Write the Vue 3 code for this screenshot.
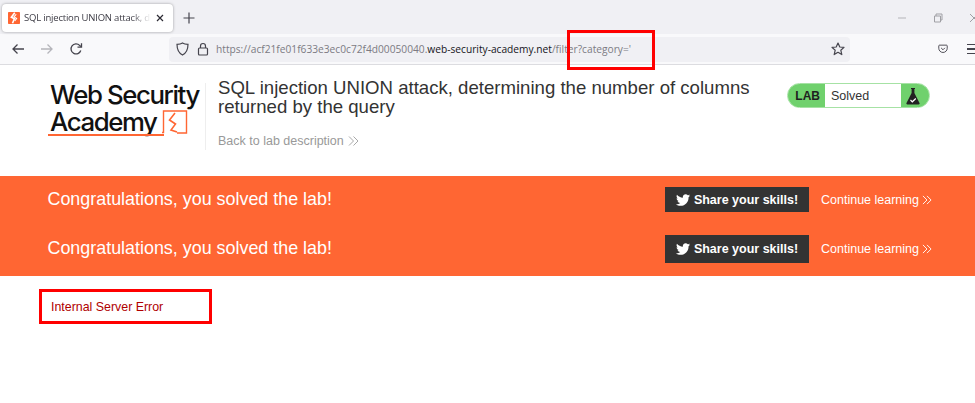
<script setup>
const rows = [1, 2]
</script>

<template>
  <div class="page">
    <div class="tabstrip">
      <div class="tab">
        <svg class="favicon" width="12" height="12" viewBox="0 0 16 16">
          <rect width="16" height="16" rx="1" fill="#ff6633" />
          <path d="M9 1 L4.500 7 L8.500 9 L6 15" fill="none" stroke="#fff" stroke-width="2.200" />
          <path d="M11 3 L8 6.500 L11.500 8.500 L9 12" fill="none" stroke="#fff" stroke-width="1.500" />
        </svg>
        <span class="tab-title">SQL injection UNION attack, de</span>
        <svg class="tab-close" width="10" height="10" viewBox="0 0 10 10">
          <path d="M2 2 L8 8 M8 2 L2 8" stroke="#2b2a33" stroke-width="1.200" />
        </svg>
      </div>
      <svg class="new-tab" width="12" height="12" viewBox="0 0 12 12">
        <path d="M6 .5 V11.500 M.5 6 H11.500" stroke="#45444d" stroke-width="1.200" />
      </svg>
      <div class="window-controls">
        <svg width="10" height="10" viewBox="0 0 10 10"><path d="M1 5 H9" stroke="#b4b4b8" /></svg>
        <svg width="10" height="10" viewBox="0 0 10 10">
          <path d="M1.500 3 H7.500 V9 H1.500 Z M3 3 V1 H9 V7 H7.500" fill="none" stroke="#a0a0a5" />
        </svg>
        <svg width="10" height="10" viewBox="0 0 10 10"><path d="M1 1 L9 9 M9 1 L1 9" stroke="#a0a0a5" /></svg>
      </div>
    </div>

    <div class="toolbar">
      <div class="nav">
        <svg width="14" height="14" viewBox="0 0 14 14">
          <path d="M13 7 H2 M6.500 2.500 L2 7 L6.500 11.500" fill="none" stroke="#45444d" stroke-width="1.300" />
        </svg>
        <svg width="14" height="14" viewBox="0 0 14 14">
          <path d="M1 7 H12 M7.500 2.500 L12 7 L7.500 11.500" fill="none" stroke="#b5b5ba" stroke-width="1.300" />
        </svg>
        <svg width="14" height="14" viewBox="0 0 14 14">
          <path d="M11.800 8.500 A5 5 0 1 1 10.600 3.400 L12 4.600" fill="none" stroke="#45444d" stroke-width="1.300" />
          <path d="M12.500 1.200 V5.200 H8.500" fill="none" stroke="#45444d" stroke-width="1.300" />
        </svg>
      </div>
      <div class="urlbar">
        <svg width="13" height="14" viewBox="0 0 13 14">
          <path d="M6.500 1 C8 2 10 2.300 12 2.300 C12 8 10.500 11 6.500 13 C2.500 11 1 8 1 2.300 C3 2.300 5 2 6.500 1 Z" fill="none" stroke="#45444d" stroke-width="1.200" />
        </svg>
        <svg width="12" height="14" viewBox="0 0 12 14">
          <rect x="1.500" y="6" width="9" height="7" rx="1" fill="none" stroke="#45444d" stroke-width="1.200" />
          <path d="M3.500 6 V4 A2.500 2.500 0 0 1 8.500 4 V6" fill="none" stroke="#45444d" stroke-width="1.200" />
        </svg>
        <span class="url">https://acf21fe01f633e3ec0c72f4d00050040.<b>web-security-academy.net</b>/filter?category='</span>
        <svg class="star" width="14" height="14" viewBox="0 0 14 14">
          <path d="M7 1 L8.800 5 L13 5.400 L9.800 8.200 L10.800 12.600 L7 10.300 L3.200 12.600 L4.200 8.200 L1 5.400 L5.200 5 Z" fill="none" stroke="#45444d" stroke-width="1.200" stroke-linejoin="round" />
        </svg>
      </div>
      <svg class="pocket" width="13" height="12" viewBox="0 0 13 12">
        <path d="M2 1 H11 A1 1 0 0 1 12 2 V5 A5.500 5.500 0 0 1 1 5 V2 A1 1 0 0 1 2 1 Z" fill="none" stroke="#45444d" stroke-width="1.200" />
        <path d="M4 4.500 L6.500 7 L9 4.500" fill="none" stroke="#45444d" stroke-width="1.200" />
      </svg>
      <div class="menu"><i></i><i></i><i></i></div>
    </div>

    <div class="lab-header">
      <div class="logo">
        <div class="logo-line">Web Security</div>
        <div class="logo-line second">
          <span>Academy</span>
          <svg class="logo-mark" width="26" height="26" viewBox="0 0 26 26">
            <path d="M0 22.500 H1.500 V1 H24.500 V23 H15" fill="none" stroke="#ff6633" stroke-width="1.400" />
            <path d="M13 3 L7.500 10 L13.500 14 L9 20 L15 22" fill="none" stroke="#ff6633" stroke-width="1.600" />
          </svg>
        </div>
        <div class="logo-underline"></div>
      </div>
      <div class="title-block">
        <h1>SQL injection UNION attack, determining the number of columns returned by the query</h1>
        <a class="back">Back to lab description <span class="chev"><svg width="11" height="10" viewBox="0 0 11 10"><path d="M1 .5 L5.500 5 L1 9.500 M5.500 .5 L10 5 L5.500 9.500" fill="none" stroke="#a8a8a8" stroke-width="1" /></svg></span></a>
      </div>
      <div class="badge">
        <span class="badge-lab">LAB</span>
        <span class="badge-state">Solved</span>
        <span class="badge-icon">
          <svg width="14" height="18" viewBox="0 0 14 18">
            <path d="M5 1 H9 V2 H8.400 V6 L13.500 16 A1 1 0 0 1 12.600 17.500 H1.400 A1 1 0 0 1 .5 16 L5.600 6 V2 H5 Z" fill="#222" />
            <path d="M4.500 13 L6.300 14.800 L9.800 11.500" fill="none" stroke="#fff" stroke-width="1.200" />
          </svg>
        </span>
      </div>
    </div>

    <div class="banner">
      <div v-for="r in rows" :key="r" class="banner-row">
        <span class="congrats">Congratulations, you solved the lab!</span>
        <a class="share">
          <svg width="14" height="12" viewBox="0 0 24 20">
            <path fill="#fff" d="M24 2.400c-.9.400-1.800.7-2.800.8 1-.6 1.800-1.600 2.200-2.700-1 .6-2 1-3.100 1.200C19.300.7 18 0 16.600 0c-2.700 0-4.900 2.200-4.900 4.900 0 .4 0 .8.1 1.100C7.700 5.800 4.100 3.900 1.700.9 1.200 1.600 1 2.500 1 3.400c0 1.700.9 3.200 2.200 4.100-.8 0-1.600-.2-2.200-.6v.1c0 2.400 1.700 4.400 3.900 4.800-.4.100-.8.200-1.300.2-.3 0-.6 0-.9-.1.600 2 2.400 3.400 4.600 3.400-1.700 1.300-3.800 2.100-6.100 2.100-.4 0-.8 0-1.200-.1C2.200 19.200 4.800 20 7.500 20c9.100 0 14-7.500 14-14v-.6c1-.7 1.800-1.600 2.500-3z" />
          </svg>
          Share your skills!
        </a>
        <a class="continue">Continue learning <svg width="10" height="10" viewBox="0 0 11 10"><path d="M1 .5 L5.500 5 L1 9.500 M5.500 .5 L10 5 L5.500 9.500" fill="none" stroke="#fff" stroke-width="1" /></svg></a>
      </div>
    </div>

    <div class="error">Internal Server Error</div>

    <div class="mark mark-url"></div>
    <div class="mark mark-error"></div>
  </div>
</template>

<style>
html, body { margin: 0; background: #fff; }
</style>

<style scoped>
.page {
  position: relative;
  width: 975px;
  height: 403px;
  overflow: hidden;
  background: #fff;
  font-family: "Liberation Sans", Arial, sans-serif;
}
.tabstrip {
  height: 34px;
  background: #f0f0f4;
  display: flex;
  align-items: center;
  box-sizing: border-box;
  padding: 3px 0 2px 2px;
}
.tab {
  width: 171px;
  height: 28px;
  flex: none;
  box-sizing: border-box;
  background: #fff;
  border-radius: 4px;
  box-shadow: 0 0 3px rgba(0, 0, 0, .35);
  display: flex;
  align-items: center;
  padding: 0 8px 0 6px;
  gap: 4px;
}
.favicon { flex: none; }
.tab-title {
  flex: 1;
  min-width: 0;
  white-space: nowrap;
  font: 9.500px "Open Sans", sans-serif;
  letter-spacing: -.2px;
  color: #3c3b44;
  -webkit-mask-image: linear-gradient(to right, #000 84%, transparent 100%);
  mask-image: linear-gradient(to right, #000 84%, transparent 100%);
}
.tab-close { flex: none; }
.new-tab { margin-left: 10px; }
.window-controls {
  margin-left: auto;
  display: flex;
  gap: 26px;
  margin-right: -4px;
}
.toolbar {
  height: 31px;
  box-sizing: border-box;
  background: #f9f9fb;
  border-bottom: 1px solid #dcdce0;
  display: flex;
  align-items: center;
  padding-left: 11px;
}
.nav {
  display: flex;
  gap: 15px;
  width: 158px;
  flex: none;
}
.urlbar {
  width: 681px;
  height: 25px;
  flex: none;
  background: #f0f0f4;
  border-radius: 4px;
  display: flex;
  align-items: center;
  padding: 0 5px 0 7px;
  box-sizing: border-box;
  gap: 8px;
}
.url {
  flex: 1;
  white-space: nowrap;
  font: 10.200px "Open Sans", sans-serif;
  color: #7c7b83;
  margin-left: -1px;
}
.url b { font-weight: 400; color: #15141a; }
.pocket { margin-left: 88px; }
.menu {
  margin-left: 19px;
  display: flex;
  flex-direction: column;
  gap: 3px;
  flex: none;
}
.menu i { display: block; width: 8px; height: 1.500px; background: #45444d; }
.lab-header {
  height: 111px;
  display: flex;
  align-items: flex-start;
  padding-left: 50px;
  box-sizing: border-box;
}
.logo {
  width: 155px;
  height: 69px;
  flex: none;
  margin-top: 16px;
  color: #111;
  font: 500 25.800px/27px Inter, sans-serif;
  letter-spacing: -1.400px;
  position: relative;
}
.logo-line { white-space: nowrap; height: 27px; }
.logo-line.second { display: flex; }
.logo-mark { margin: 2px 0 0 5px; flex: none; }
.logo-underline {
  position: absolute;
  left: -2px;
  top: 53px;
  width: 116px;
  height: 1.500px;
  background: #ff6633;
}
.title-block {
  width: 560px;
  flex: none;
  margin-top: 18px;
  padding-left: 12px;
  height: 67px;
  border-left: 1px solid #eee;
}
h1 {
  margin: -5px 0 0;
  width: 535px;
  font-size: 18.600px;
  font-weight: 400;
  line-height: 19px;
  color: #333;
}
.back {
  display: flex;
  align-items: center;
  gap: 2px;
  margin-top: 17px;
  font-size: 12.500px;
  line-height: 16px;
  color: #999;
}
.chev { margin-left: 2px; display: flex; }
.badge {
  margin: 18px 0 0 9px;
  width: 143px;
  height: 25px;
  flex: none;
  display: flex;
  box-sizing: border-box;
  border: 1px solid #a6e2a4;
  border-radius: 13px;
  overflow: hidden;
  background: #fff;
}
.badge-lab {
  width: 37px;
  background: #70d16d;
  color: #1f1f1f;
  font-size: 12px;
  font-weight: 700;
  line-height: 24px;
  text-align: right;
  padding-right: 5px;
  box-sizing: border-box;
}
.badge-state {
  flex: 1;
  font-size: 12.500px;
  line-height: 24px;
  color: #333;
  padding-left: 6px;
}
.badge-icon {
  width: 28px;
  background: #70d16d;
  display: flex;
  align-items: center;
  padding-left: 5px;
  box-sizing: border-box;
}
.banner {
  height: 100px;
  background: #ff6633;
  padding-left: 47.500px;
  box-sizing: border-box;
  display: grid;
  grid-template-rows: 47px 51px;
}
.banner-row {
  display: flex;
  align-items: center;
  color: #fff;
}
.congrats { width: 617.500px; font-size: 17.900px; flex: none; }
.share {
  width: 144px;
  height: 25px;
  box-sizing: border-box;
  background: #333;
  display: flex;
  align-items: center;
  justify-content: center;
  gap: 4px;
  font-size: 12.500px;
  font-weight: 700;
  flex: none;
}
.banner-row:nth-child(2) .share { height: 28px; }
.continue {
  margin-left: 12px;
  font-size: 12.500px;
  display: flex;
  align-items: center;
  gap: 3px;
  white-space: nowrap;
}
.error {
  padding: 23px 0 0 51px;
  font-size: 12.400px;
  line-height: 16px;
  color: #b00000;
}
.mark {
  position: absolute;
  box-sizing: border-box;
  border: 3px solid #ff0000;
}
.mark-url { left: 567px; top: 30px; width: 88px; height: 40px; }
.mark-error { left: 39px; top: 289px; width: 173px; height: 35px; }
</style>
